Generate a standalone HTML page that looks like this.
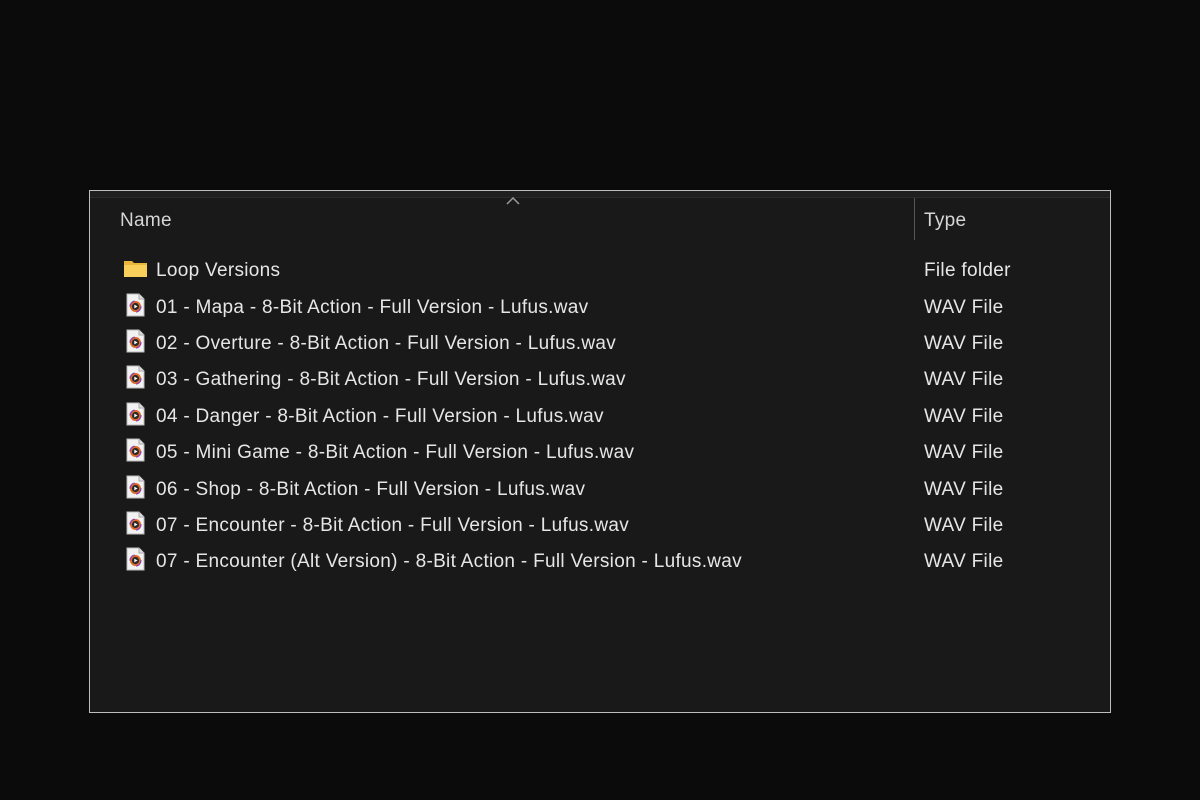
<!DOCTYPE html>
<html><head><style>
body{margin:0;width:1200px;height:800px;background:#0b0b0b;position:relative;overflow:hidden;font-family:"Liberation Sans",sans-serif;}
.win{position:absolute;left:89px;top:190px;width:1020px;height:521px;border:1px solid #bdbdbd;background:#191919;}
.strip{position:absolute;left:0;top:0;right:0;height:6px;background:#1f1f1f;border-bottom:1px solid #2b2b2b}
.t{position:absolute;color:#e6e6e6;font-size:19px;letter-spacing:0.3px;white-space:nowrap;line-height:22px}
.h{color:#d6d6d6}
.div{position:absolute;left:824px;top:7px;width:1px;height:42px;background:#555}
.ic{position:absolute}
</style></head><body>
<div class="win">
<div class="strip"></div>
<svg style="position:absolute;left:416px;top:6px" width="14" height="8"><path d="M1 7 L7 1 L13 7" stroke="#9a9a9a" stroke-width="1.5" fill="none"/></svg>
<div class="t h" style="left:30px;top:19px">Name</div>
<div class="div"></div>
<div class="t h" style="left:834px;top:19px">Type</div>
</div>
<div id="rows"></div>
<svg class="ic" style="left:123px;top:259px" width="26" height="20"><path d="M1 2 h8 l2 2 h13 v14 h-23z" fill="#e9b53a"/><path d="M1 6 h23 v12 h-23z" fill="#f7cf5a"/></svg>
<div class="t" style="left:156px;top:260px">Loop Versions</div>
<div class="t" style="left:924px;top:260px">File folder</div>
<script>
const names=["01 - Mapa - 8-Bit Action - Full Version - Lufus.wav","02 - Overture - 8-Bit Action - Full Version - Lufus.wav","03 - Gathering - 8-Bit Action - Full Version - Lufus.wav","04 - Danger - 8-Bit Action - Full Version - Lufus.wav","05 - Mini Game - 8-Bit Action - Full Version - Lufus.wav","06 - Shop - 8-Bit Action - Full Version - Lufus.wav","07 - Encounter - 8-Bit Action - Full Version - Lufus.wav","07 - Encounter (Alt Version) - 8-Bit Action - Full Version - Lufus.wav"];
let h="";
names.forEach((n,i)=>{const y=296.5+i*36.4;
h+=`<svg class="ic" style="left:126px;top:${y-4}px" width="20" height="24"><path d="M1 1 h12 l5 5 v17 h-17z" fill="#f2f2f2" stroke="#bbb" stroke-width="1"/><path d="M13 1 v5 h5" fill="#ddd" stroke="#aaa" stroke-width="1"/><circle cx="9.5" cy="13.5" r="5.5" fill="#e06a2a"/><circle cx="9.5" cy="13.5" r="5.5" fill="none" stroke="#8b3fb8" stroke-width="1.2" stroke-dasharray="8 9"/><circle cx="9.5" cy="13.5" r="3.6" fill="#2a2a2a"/><path d="M8.3 11.6 L11.6 13.5 L8.3 15.4z" fill="#fff"/></svg>
<div class="t" style="left:156px;top:${y}px">${n}</div><div class="t" style="left:924px;top:${y}px">WAV File</div>`;});
document.getElementById("rows").innerHTML=h;
</script>
</body></html>
